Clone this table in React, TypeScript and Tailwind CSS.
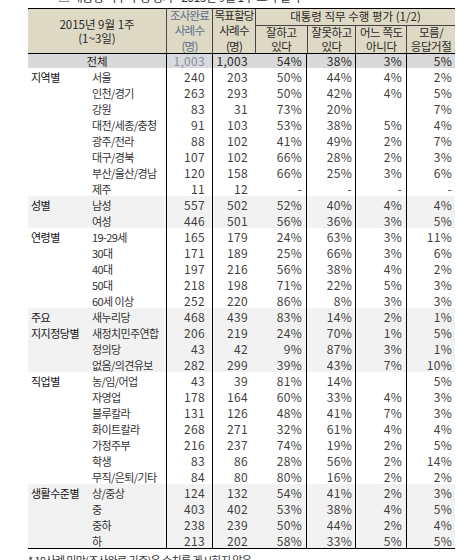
type Row = {
  name: string;
  done: string;
  target: string;
  good: string;
  bad: string;
  neither: string;
  unknown: string;
};

type Group = {
  label: string[];
  shaded: boolean;
  rows: Row[];
};

const r = (
  name: string,
  done: string,
  target: string,
  good: string,
  bad: string,
  neither: string,
  unknown: string
): Row => ({ name, done, target, good, bad, neither, unknown });

const groups: Group[] = [
  {
    label: ["지역별"],
    shaded: false,
    rows: [
      r("서울", "240", "203", "50%", "44%", "4%", "2%"),
      r("인천/경기", "263", "293", "50%", "42%", "4%", "5%"),
      r("강원", "83", "31", "73%", "20%", "", "7%"),
      r("대전/세종/충청", "91", "103", "53%", "38%", "5%", "4%"),
      r("광주/전라", "88", "102", "41%", "49%", "2%", "7%"),
      r("대구/경북", "107", "102", "66%", "28%", "2%", "3%"),
      r("부산/울산/경남", "120", "158", "66%", "25%", "3%", "6%"),
      r("제주", "11", "12", "-", "-", "-", "-"),
    ],
  },
  {
    label: ["성별"],
    shaded: true,
    rows: [
      r("남성", "557", "502", "52%", "40%", "4%", "4%"),
      r("여성", "446", "501", "56%", "36%", "3%", "5%"),
    ],
  },
  {
    label: ["연령별"],
    shaded: false,
    rows: [
      r("19-29세", "165", "179", "24%", "63%", "3%", "11%"),
      r("30대", "171", "189", "25%", "66%", "3%", "6%"),
      r("40대", "197", "216", "56%", "38%", "4%", "2%"),
      r("50대", "218", "198", "71%", "22%", "5%", "3%"),
      r("60세 이상", "252", "220", "86%", "8%", "3%", "3%"),
    ],
  },
  {
    label: ["주요", "지지정당별"],
    shaded: true,
    rows: [
      r("새누리당", "468", "439", "83%", "14%", "2%", "1%"),
      r("새정치민주연합", "206", "219", "24%", "70%", "1%", "5%"),
      r("정의당", "43", "42", "9%", "87%", "3%", "1%"),
      r("없음/의견유보", "282", "299", "39%", "43%", "7%", "10%"),
    ],
  },
  {
    label: ["직업별"],
    shaded: false,
    rows: [
      r("농/임/어업", "43", "39", "81%", "14%", "", "5%"),
      r("자영업", "178", "164", "60%", "33%", "4%", "3%"),
      r("블루칼라", "131", "126", "48%", "41%", "7%", "3%"),
      r("화이트칼라", "268", "271", "32%", "61%", "4%", "4%"),
      r("가정주부", "216", "237", "74%", "19%", "2%", "5%"),
      r("학생", "83", "86", "28%", "56%", "2%", "14%"),
      r("무직/은퇴/기타", "84", "80", "80%", "16%", "2%", "2%"),
    ],
  },
  {
    label: ["생활수준별"],
    shaded: true,
    rows: [
      r("상/중상", "124", "132", "54%", "41%", "2%", "3%"),
      r("중", "403", "402", "53%", "38%", "4%", "5%"),
      r("중하", "238", "239", "50%", "44%", "2%", "4%"),
      r("하", "213", "202", "58%", "33%", "5%", "5%"),
    ],
  },
];

const num = "text-right text-[12px] tracking-[0.3px] text-[#3f3f3f] pt-[2px] leading-[14px]";

function DataRow({ row }: { row: Row }) {
  return (
    <div className="flex h-[16px]">
      <div className="w-[75px] pl-[1px] pt-[2px] leading-[14px] text-[11px] tracking-[-0.6px] text-[#333] whitespace-nowrap">
        {row.name}
      </div>
      <div className={`w-[46px] border-l border-black pr-[7px] ${num}`}>{row.done}</div>
      <div className={`w-[43px] border-l border-black pr-[7px] ${num}`}>{row.target}</div>
      <div className={`w-[51px] pr-[4px] ${num}`}>{row.good}</div>
      <div className={`w-[49px] border-l border-black pr-[3px] ${num}`}>{row.bad}</div>
      <div className={`w-[51px] border-l border-black pr-[4px] ${num}`}>{row.neither}</div>
      <div className={`w-[49px] border-l border-black pr-[3px] ${num}`}>{row.unknown}</div>
    </div>
  );
}

export default function App() {
  return (
    <div
      className="bg-white w-[471px] h-[560px] overflow-hidden"
      style={{ fontFamily: '"Noto Sans CJK KR", "Noto Sans", sans-serif' }}
    >
      {/* caption cut off by the top edge */}
      <div className="h-[8px] overflow-hidden">
        <div className="-mt-[10px] ml-[58px] text-[12px] leading-[14px] text-[#333] tracking-[-0.5px] whitespace-nowrap">
          ▣ 대통령 직무 수행 평가 - 2015년 9월 1주 조사 결과
        </div>
      </div>

      <div className="ml-[28px] w-[427px]">
        {/* header */}
        <div className="flex h-[46px] bg-[#ddd9c4] border-t border-b border-black text-[11.5px] text-[#2a2a2a]">
          <div className="w-[138px] flex flex-col items-center justify-center leading-[14px]">
            <span>2015년 9월 1주</span>
            <span>(1~3일)</span>
          </div>
          <div className="w-[46px] border-l border-[#444] flex flex-col items-center justify-center leading-[15.5px] text-[#5a6f8c] tracking-[-0.8px]">
            <span>조사완료</span>
            <span>사례수</span>
            <span>(명)</span>
          </div>
          <div className="w-[43px] border-l border-[#444] flex flex-col items-center justify-center leading-[15.5px] tracking-[-0.8px]">
            <span>목표할당</span>
            <span>사례수</span>
            <span>(명)</span>
          </div>
          <div className="w-[200px] border-l border-[#444] flex flex-col">
            <div className="h-[17px] border-b border-[#444] text-center leading-[14px]">
              대통령 직무 수행 평가 (1/2)
            </div>
            <div className="flex flex-1 leading-[13.5px] tracking-[-0.4px]">
              <div className="w-[51px] flex flex-col items-center justify-center">
                <span>잘하고</span>
                <span>있다</span>
              </div>
              <div className="w-[49px] border-l border-[#444] flex flex-col items-center justify-center">
                <span>잘못하고</span>
                <span>있다</span>
              </div>
              <div className="w-[51px] border-l border-[#444] flex flex-col items-center justify-center">
                <span>어느 쪽도</span>
                <span>아니다</span>
              </div>
              <div className="w-[49px] border-l border-[#444] flex flex-col items-center justify-center">
                <span>모름/</span>
                <span>응답거절</span>
              </div>
            </div>
          </div>
        </div>

        {/* total */}
        <div className="flex h-[14px] bg-[#d9d9d9] leading-[14px]">
          <div className="w-[138px] text-center text-[11.5px] text-[#222]">전체</div>
          <div className="w-[46px] border-l border-black bg-[#d7dbe0] pr-[7px] text-right text-[12px] tracking-[0.3px] text-[#8e8e8e]">
            1,003
          </div>
          <div className="w-[43px] border-l border-black pr-[7px] text-right text-[12px] tracking-[0.3px] text-[#2a2a2a]">
            1,003
          </div>
          <div className="w-[51px] pr-[4px] text-right text-[12px] tracking-[0.3px] text-[#2a2a2a]">54%</div>
          <div className="w-[49px] border-l border-black pr-[3px] text-right text-[12px] tracking-[0.3px] text-[#2a2a2a]">38%</div>
          <div className="w-[51px] border-l border-black pr-[4px] text-right text-[12px] tracking-[0.3px] text-[#2a2a2a]">3%</div>
          <div className="w-[49px] border-l border-black pr-[3px] text-right text-[12px] tracking-[0.3px] text-[#2a2a2a]">5%</div>
        </div>

        {/* body */}
        <div className="border-b border-black">
          {groups.map((g) => (
            <div key={g.label.join("")} className={`flex ${g.shaded ? "bg-[#f2f2f2]" : ""}`}>
              <div className="w-[63px] pl-[3px] flex flex-col">
                {g.label.map((l) => (
                  <div key={l} className="h-[16px] pt-[2px] leading-[14px] text-[11px] tracking-[-0.5px] text-[#111] whitespace-nowrap">
                    {l}
                  </div>
                ))}
              </div>
              <div className="flex flex-col">
                {g.rows.map((row) => (
                  <DataRow key={row.name} row={row} />
                ))}
              </div>
            </div>
          ))}
        </div>

        <div className="mt-[3px] text-[11px] leading-[16px] text-[#333] tracking-[-0.6px] whitespace-nowrap">
          * 10사례 미만(조사완료 기준)은 수치를 게시하지 않음
        </div>
      </div>
    </div>
  );
}
